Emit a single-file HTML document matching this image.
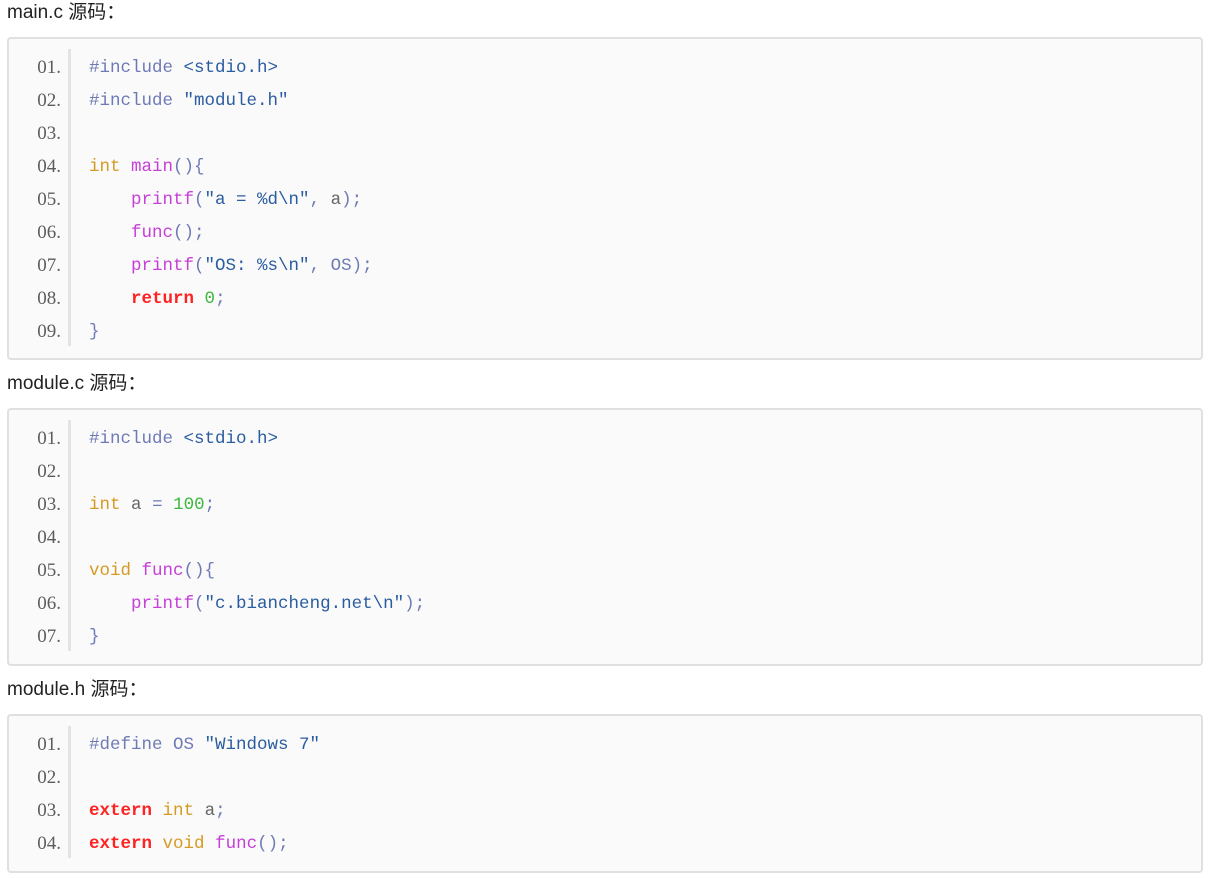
<!DOCTYPE html>
<html><head><meta charset="utf-8"><style>
body{margin:0;background:#fff;width:1210px;height:878px;overflow:hidden;font-family:"Liberation Sans","Noto Sans CJK SC",sans-serif;}
h4{position:absolute;left:7px;margin:0;font-weight:normal;font-size:19px;color:#222;line-height:24px}
.box{position:absolute;left:7px;width:1196px;border:2px solid #e0e0e0;border-radius:4px;background:#fafafa;box-sizing:border-box;padding:10px 0}
.ln{display:flex;height:33px;line-height:33px;font-family:"Liberation Mono","Noto Sans CJK SC",monospace;font-size:17.5px;white-space:pre}
.n{width:52px;text-align:right;color:#5c5c5c;padding-right:7px;border-right:3px solid #e4e4e4;font-family:"Liberation Serif",serif;font-size:19px;padding-top:2px;box-sizing:content-box;height:31px}
.c{padding-left:18px;color:#5a6fa8;padding-top:3px}
.p{color:#6e7ab6}.s{color:#2a5ca0}.k{color:#d49b22}.f{color:#c63fd8}.r{color:#f22;font-weight:bold}.g{color:#3cb83c}.v{color:#666}
</style></head><body>
<h4 style="top:1px">main.c 源码：</h4>
<div class="box" style="top:37px;height:323px">
<div class="ln"><div class="n">01.</div><div class="c"><span class="p">#include </span><span class="s">&lt;stdio.h&gt;</span></div></div>
<div class="ln"><div class="n">02.</div><div class="c"><span class="p">#include </span><span class="s">"module.h"</span></div></div>
<div class="ln"><div class="n">03.</div><div class="c"></div></div>
<div class="ln"><div class="n">04.</div><div class="c"><span class="k">int</span> <span class="f">main</span><span class="p">(){</span></div></div>
<div class="ln"><div class="n">05.</div><div class="c">    <span class="f">printf</span><span class="p">(</span><span class="s">"a = %d\n"</span><span class="p">, </span><span class="v">a</span><span class="p">);</span></div></div>
<div class="ln"><div class="n">06.</div><div class="c">    <span class="f">func</span><span class="p">();</span></div></div>
<div class="ln"><div class="n">07.</div><div class="c">    <span class="f">printf</span><span class="p">(</span><span class="s">"OS: %s\n"</span><span class="p">, OS);</span></div></div>
<div class="ln"><div class="n">08.</div><div class="c">    <span class="r">return</span> <span class="g">0</span><span class="p">;</span></div></div>
<div class="ln"><div class="n">09.</div><div class="c"><span class="p">}</span></div></div>
</div>
<h4 style="top:372px">module.c 源码：</h4>
<div class="box" style="top:408px;height:258px">
<div class="ln"><div class="n">01.</div><div class="c"><span class="p">#include </span><span class="s">&lt;stdio.h&gt;</span></div></div>
<div class="ln"><div class="n">02.</div><div class="c"></div></div>
<div class="ln"><div class="n">03.</div><div class="c"><span class="k">int</span> <span class="v">a</span> <span class="p">=</span> <span class="g">100</span><span class="p">;</span></div></div>
<div class="ln"><div class="n">04.</div><div class="c"></div></div>
<div class="ln"><div class="n">05.</div><div class="c"><span class="k">void</span> <span class="f">func</span><span class="p">(){</span></div></div>
<div class="ln"><div class="n">06.</div><div class="c">    <span class="f">printf</span><span class="p">(</span><span class="s">"c.biancheng.net\n"</span><span class="p">);</span></div></div>
<div class="ln"><div class="n">07.</div><div class="c"><span class="p">}</span></div></div>
</div>
<h4 style="top:678px">module.h 源码：</h4>
<div class="box" style="top:714px;height:159px">
<div class="ln"><div class="n">01.</div><div class="c"><span class="p">#define OS </span><span class="s">"Windows 7"</span></div></div>
<div class="ln"><div class="n">02.</div><div class="c"></div></div>
<div class="ln"><div class="n">03.</div><div class="c"><span class="r">extern</span> <span class="k">int</span> <span class="v">a</span><span class="p">;</span></div></div>
<div class="ln"><div class="n">04.</div><div class="c"><span class="r">extern</span> <span class="k">void</span> <span class="f">func</span><span class="p">();</span></div></div>
</div>
</body></html>
